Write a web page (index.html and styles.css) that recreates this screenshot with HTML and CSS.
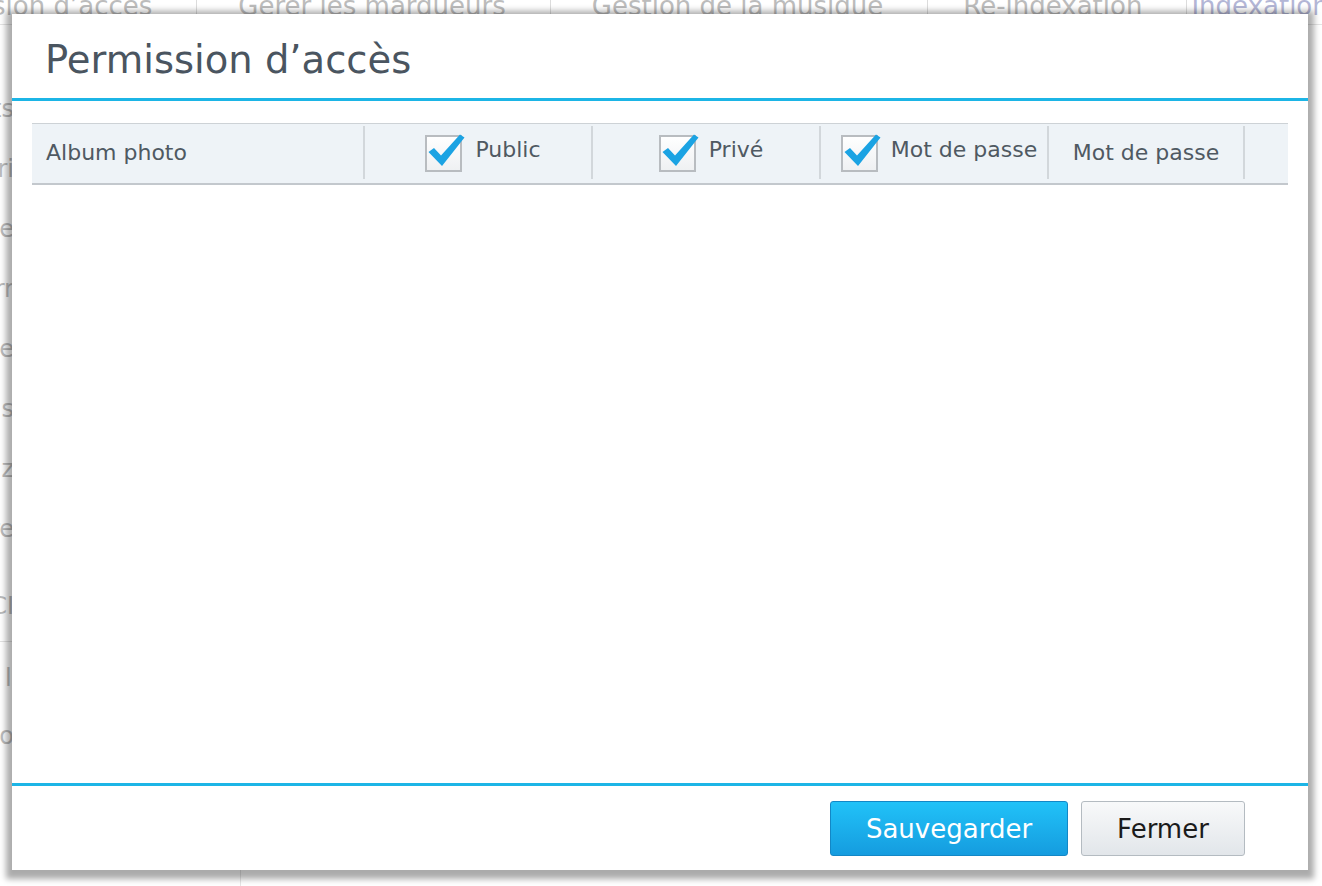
FILE: index.html
```html
<!DOCTYPE html>
<html lang="fr">

<head>
    <meta charset="utf-8" />
    <title>Permission d'accès</title>
    <link rel="stylesheet" href="styles.css">
</head>

<body>
    <div class="page">
        <div class="tabs">
            <div class="tab first">Permission d’accès</div>
            <div class="tab">Gérer les marqueurs</div>
            <div class="tab">Gestion de la musique</div>
            <div class="tab narrow">Re-indexation</div>
            <div class="tab active">Indexation</div>
        </div>
        <div class="side">
            <div class="side-item">Vets</div>
            <div class="side-item">Vori</div>
            <div class="side-item">Vite</div>
            <div class="side-item">Vorr</div>
            <div class="side-item">Vue</div>
            <div class="side-item">Vis</div>
            <div class="side-item">Vuz</div>
            <div class="side-item">Vre</div>
            <div class="side-item gap">VCI</div>
            <div class="side-item sep">l</div>
            <div class="side-item">Vlo</div>
        </div>
    </div>

    <div class="dialog">
        <div class="dlg-head">
            <h1 class="dlg-title">Permission d’accès</h1>
        </div>
        <div class="dlg-body">
            <div class="grid-head">
                <div class="cell first">Album photo</div>
                <div class="cell check">
                    <svg class="chk" width="40" height="39" viewBox="0 0 40 39">
                        <defs>
                            <linearGradient id="cb" x1="0" y1="0" x2="0" y2="1">
                                <stop offset="0" stop-color="#ffffff" />
                                <stop offset="1" stop-color="#eef0f2" />
                            </linearGradient>
                        </defs>
                        <rect x="1" y="3" width="35" height="35" fill="url(#cb)" stroke="#b8bcc0" stroke-width="2" />
                        <path d="M3.5 19 L9 15 L16 22.5 L35 1.5 L39.5 4.5 L17 33 Z" fill="#1ba3e3" />
                    </svg>
                    <span>Public</span>
                </div>
                <div class="cell check">
                    <svg class="chk" width="40" height="39" viewBox="0 0 40 39">
                        <rect x="1" y="3" width="35" height="35" fill="url(#cb)" stroke="#b8bcc0" stroke-width="2" />
                        <path d="M3.5 19 L9 15 L16 22.5 L35 1.5 L39.5 4.5 L17 33 Z" fill="#1ba3e3" />
                    </svg>
                    <span>Privé</span>
                </div>
                <div class="cell check">
                    <svg class="chk" width="40" height="39" viewBox="0 0 40 39">
                        <rect x="1" y="3" width="35" height="35" fill="url(#cb)" stroke="#b8bcc0" stroke-width="2" />
                        <path d="M3.5 19 L9 15 L16 22.5 L35 1.5 L39.5 4.5 L17 33 Z" fill="#1ba3e3" />
                    </svg>
                    <span>Mot de passe</span>
                </div>
                <div class="cell">Mot de passe</div>
                <div class="cell last"></div>
            </div>
        </div>
        <div class="dlg-foot">
            <button class="btn btn-primary">Sauvegarder</button>
            <button class="btn">Fermer</button>
        </div>
    </div>
</body>

</html>
```

FILE: styles.css
```css
html,
body {
    margin: 0;
    height: 100%;
}

body {
    width: 1322px;
    height: 886px;
    overflow: hidden;
    position: relative;
    background: #fff;
    font-family: "DejaVu Sans", "Liberation Sans", sans-serif;
}

/* page behind the dialog */
.page {
    color: #bcbcbc;
    font-size: 26px;
    height: 886px;
    overflow: hidden;
}

.tabs {
    display: flex;
    height: 36px;
    margin-top: -12px;
    align-items: center;
    white-space: nowrap;
    border-bottom: 1px solid #e4e4e4;
}

.tab {
    padding: 0 44px 0 41px;
    border-right: 1px solid #dcdcdc;
}

.tab.first {
    margin-left: -136px;
}

.tab.narrow {
    padding-left: 35px;
}

.tab.active {
    color: #b3b6d6;
    border-right: none;
    margin-left: -37px;
}

.side {
    width: 240px;
    height: 792px;
    padding-top: 70px;
    border-right: 1px solid #e6e6e6;
}

.side-item {
    height: 60px;
    width: 14px;
    overflow: hidden;
    font-size: 24px;
    white-space: nowrap;
    direction: rtl;
}

.side-item.gap {
    height: 49px;
    margin-top: 17px;
}

.side-item.sep {
    border-top: 1px solid #e2e2e2;
    width: 240px;
    padding-top: 22px;
    height: 58px;
    text-indent: 5px;
    direction: ltr;
}

/* dialog */
.dialog {
    position: absolute;
    left: 12px;
    top: 14px;
    width: 1296px;
    height: 856px;
    background: #fff;
    box-shadow: 0 3px 6px 6px rgba(0, 0, 0, 0.33);
    display: flex;
    flex-direction: column;
}

.dlg-head {
    height: 87px;
    box-sizing: border-box;
    border-bottom: 3px solid #1cb5e6;
    padding: 6px 0 0 33px;
    display: flex;
    align-items: center;
}

.dlg-title {
    margin: 0;
    font-size: 38.5px;
    font-weight: normal;
    color: #4a5560;
}

.dlg-body {
    flex: 1;
    padding: 22px 20px;
}

.grid-head {
    display: grid;
    grid-template-columns: 333px 228px 228px 228px 196px 1fr;
    height: 59px;
    background: #eef3f7;
    border-top: 1px solid #cdd2d6;
    border-bottom: 2px solid #c3c8cd;
    color: #4f5962;
    font-size: 22px;
}

.cell {
    margin: 2px 0 4px;
    border-right: 2px solid #d2d7db;
    display: flex;
    align-items: center;
    justify-content: center;
    gap: 10px;
}

.cell.check {
    padding-left: 10px;
}

.cell.first {
    justify-content: flex-start;
    padding-left: 14px;
}

.cell.last {
    border-right: none;
}

.cell span {
    margin-bottom: 6px;
}

.chk {
    display: block;
}

.dlg-foot {
    height: 84px;
    border-top: 3px solid #1cb5e6;
    display: flex;
    justify-content: flex-end;
    align-items: center;
    gap: 13px;
    padding-right: 63px;
}

.btn {
    height: 55px;
    width: 164px;
    border: 1px solid #b4bbc1;
    border-radius: 3px;
    background: linear-gradient(#f8f9fa, #e2e6ea);
    color: #1b1b1b;
    font-family: inherit;
    font-size: 26px;
    padding: 2px 0 0;
}

.btn-primary {
    width: 238px;
    border-color: #1387c6;
    background: linear-gradient(#21c2f8, #159cdf);
    color: #fff;
}
```
